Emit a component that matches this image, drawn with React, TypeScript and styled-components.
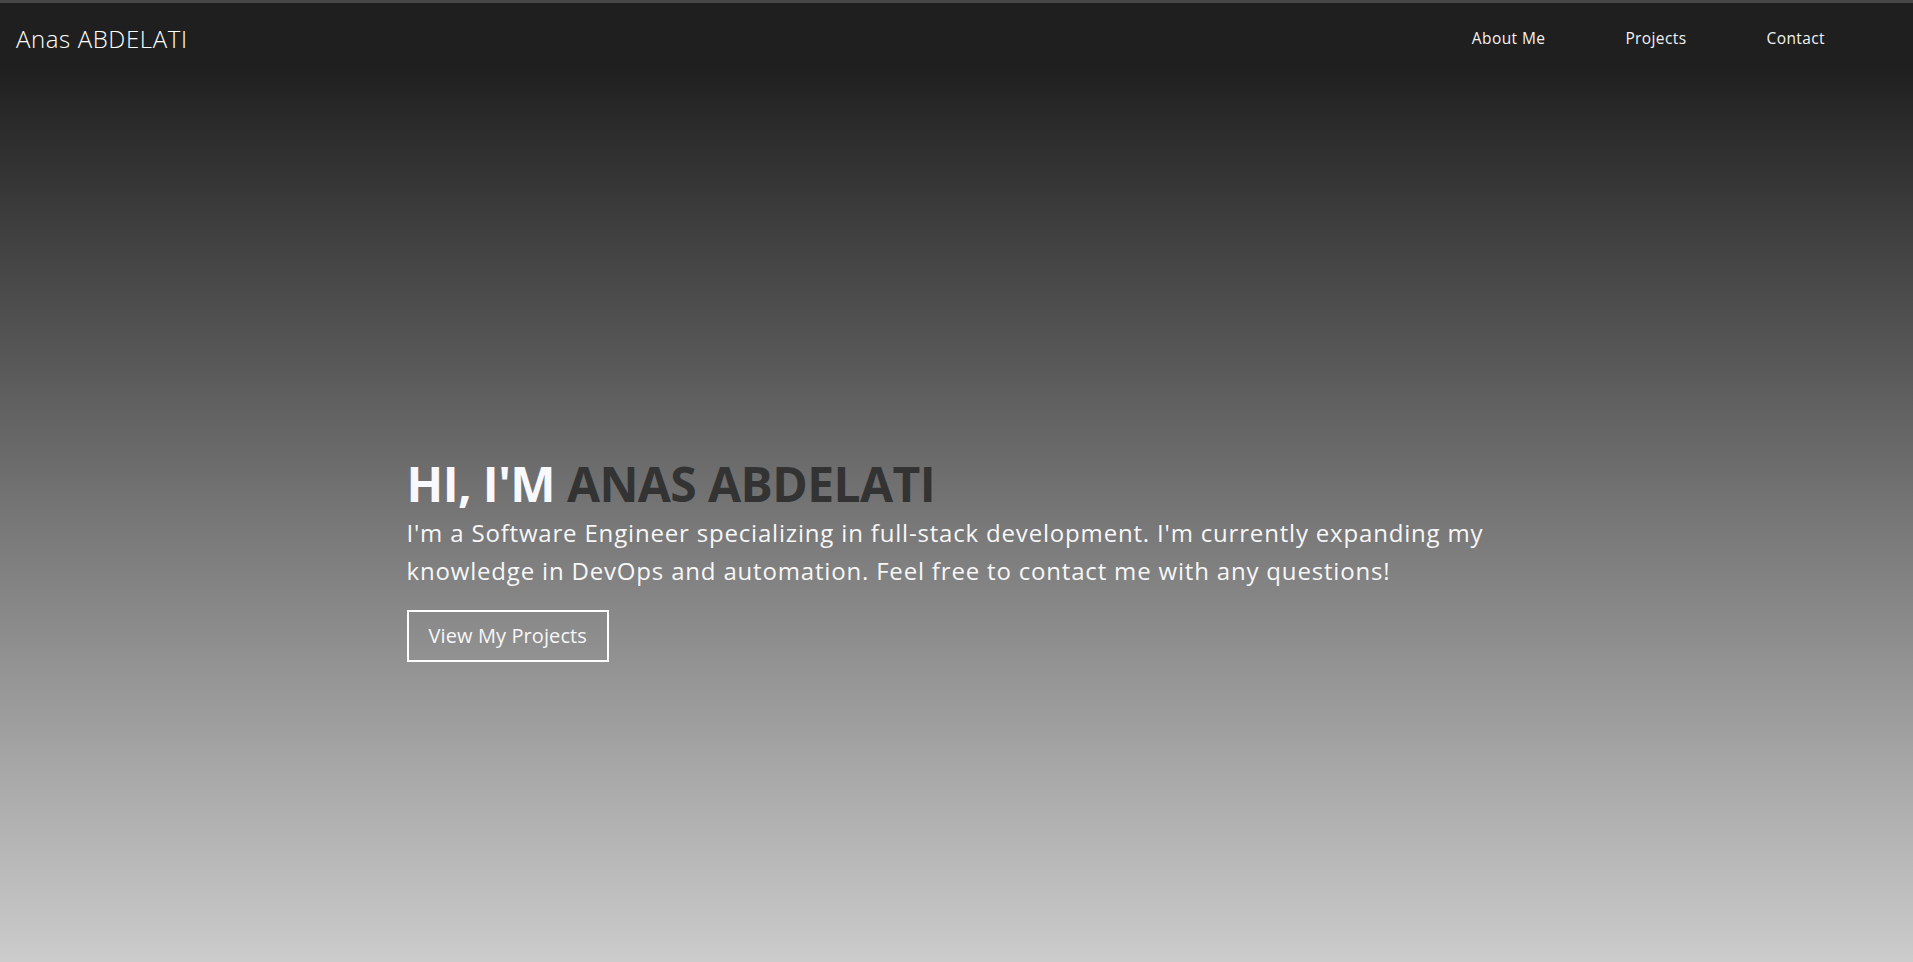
import React from "react";
import styled, { createGlobalStyle } from "styled-components";

const GlobalStyle = createGlobalStyle`
  *, *::before, *::after { box-sizing: border-box; }
  html, body { margin: 0; padding: 0; }
  body {
    font-family: "Open Sans", "Liberation Sans", sans-serif;
    background: #cccccc;
  }
`;

const Page = styled.div`
  min-height: 100vh;
  border-top: 3px solid #474747;
  background: linear-gradient(180deg, #1f1f1f 0px, #1f1f1f 62px, #cccccc 100%);
  display: flex;
  flex-direction: column;
`;

const Header = styled.header`
  height: 70px;
  display: flex;
  align-items: center;
  justify-content: space-between;
  padding: 0 88px 0 16px;
`;

const Logo = styled.a`
  font-size: 24px;
  font-weight: 300;
  letter-spacing: 0.6px;
  color: #ffffff;
  text-decoration: none;
`;

const Nav = styled.nav`
  display: flex;
  align-items: center;
  gap: 80px;
`;

const NavLink = styled.a`
  font-size: 15.5px;
  font-weight: 400;
  letter-spacing: 0.4px;
  color: #f2f2f2;
  text-decoration: none;
`;

const Hero = styled.section`
  width: 100%;
  max-width: 1100px;
  margin: 0 auto;
  padding-top: 382px;
  display: flex;
  flex-direction: column;
  align-items: flex-start;
`;

const Title = styled.h1`
  margin: 0;
  font-size: 48px;
  line-height: 1.2;
  font-weight: 700;
  letter-spacing: -0.6px;
  color: #f8f8ff;
`;

const Accent = styled.span`
  color: #333333;
`;

const Intro = styled.p`
  margin: 1px 0 0;
  font-size: 24px;
  line-height: 1.6;
  font-weight: 400;
  letter-spacing: 0.82px;
  color: #f7f7f7;
`;

const Button = styled.a`
  margin-top: 20px;
  display: inline-block;
  padding: 10px 20px;
  border: 2px solid #ffffff;
  font-size: 20px;
  line-height: 28px;
  font-weight: 400;
  letter-spacing: 0.1px;
  color: #f7f7f7;
  text-decoration: none;
`;

export default function App() {
  return (
    <>
      <GlobalStyle />
      <Page>
        <Header>
          <Logo href="#">Anas ABDELATI</Logo>
          <Nav>
            <NavLink href="#about">About Me</NavLink>
            <NavLink href="#projects">Projects</NavLink>
            <NavLink href="#contact">Contact</NavLink>
          </Nav>
        </Header>
        <Hero>
          <Title>
            HI, I'M <Accent>ANAS ABDELATI</Accent>
          </Title>
          <Intro>
            I'm a Software Engineer specializing in full-stack development. I'm currently expanding my
            knowledge in DevOps and automation. Feel free to contact me with any questions!
          </Intro>
          <Button href="#projects">View My Projects</Button>
        </Hero>
      </Page>
    </>
  );
}
